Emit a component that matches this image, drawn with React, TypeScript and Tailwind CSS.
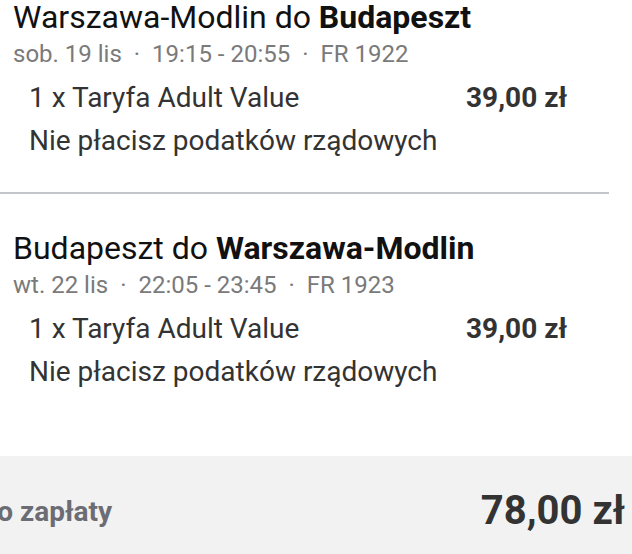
import React from 'react';

type Leg = {
  from: string;
  to: string;
  date: string;
  time: string;
  flight: string;
  fare: string;
  price: string;
};

const legs: Leg[] = [
  {
    from: 'Warszawa-Modlin',
    to: 'Budapeszt',
    date: 'sob. 19 lis',
    time: '19:15 - 20:55',
    flight: 'FR 1922',
    fare: '1 x Taryfa Adult Value',
    price: '39,00 zł',
  },
  {
    from: 'Budapeszt',
    to: 'Warszawa-Modlin',
    date: 'wt. 22 lis',
    time: '22:05 - 23:45',
    flight: 'FR 1923',
    fare: '1 x Taryfa Adult Value',
    price: '39,00 zł',
  },
];

function Dot() {
  return <span className="mx-[12px] text-[#7a7a7a]">·</span>;
}

function LegSummary({ leg }: { leg: Leg }) {
  return (
    <div className="pl-[13px]">
      <h2 className="text-[32px] leading-[34px] font-normal text-[#111111] whitespace-nowrap">
        {leg.from} do <span className="font-bold">{leg.to}</span>
      </h2>
      <p className="mt-[6px] text-[24px] leading-[28px] text-[#7a7a7a] tabular-nums whitespace-nowrap">
        {leg.date}
        <Dot />
        {leg.time}
        <Dot />
        {leg.flight}
      </p>
      <div className="mt-[8px] pl-[16px] pr-[42px] text-[28px] leading-[43px] text-[#333333]">
        <div className="flex justify-between">
          <span>{leg.fare}</span>
          <span className="font-bold">{leg.price}</span>
        </div>
        <div>Nie płacisz podatków rządowych</div>
      </div>
    </div>
  );
}

export default function App() {
  return (
    <div
      className="w-[632px] h-[554px] overflow-hidden bg-white flex flex-col"
      style={{ fontFamily: 'Roboto, "Noto Sans", sans-serif' }}
    >
      <div className="w-[609px]">
        <LegSummary leg={legs[0]} />
        <div className="mt-[30px] h-[2px] bg-[#c3c6ca]" />
        <div className="mt-[37px]">
          <LegSummary leg={legs[1]} />
        </div>
      </div>

      <div className="mt-auto h-[98px] bg-[#f2f2f2] flex justify-between items-start pt-[31px] pr-[7px]">
        <span className="-ml-[21px] mt-[8px] text-[28px] leading-[34px] font-bold text-[#6b6c74] whitespace-nowrap">
          Do zapłaty
        </span>
        <span className="text-[40px] leading-[48px] font-bold text-[#333333] whitespace-nowrap">78,00 zł</span>
      </div>
    </div>
  );
}
